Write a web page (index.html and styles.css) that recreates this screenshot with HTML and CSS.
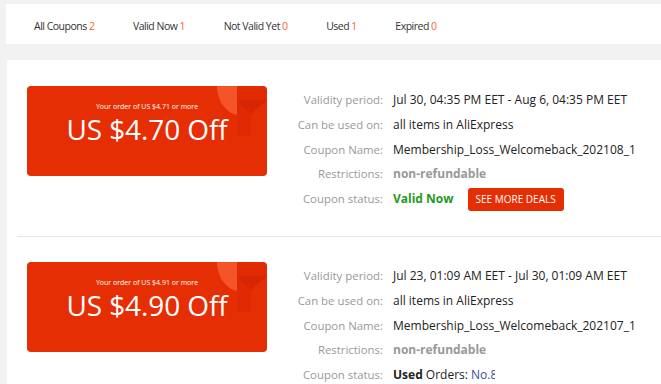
FILE: index.html
```html
<!DOCTYPE html>
<html lang="en">
<head>
<meta charset="utf-8">
<title>My Coupons</title>
<link rel="stylesheet" href="styles.css">
</head>
<body>
<div class="tabs">
  <span class="tab">All Coupons <em>2</em></span>
  <span class="tab">Valid Now <em>1</em></span>
  <span class="tab">Not Valid Yet <em>0</em></span>
  <span class="tab">Used <em>1</em></span>
  <span class="tab">Expired <em>0</em></span>
</div>

<div class="card">
  <div class="item">
    <div class="coupon">
      <svg class="deco" viewBox="0 0 50 50" width="50" height="50" aria-hidden="true">
        <path d="M20 0 H50 V14 L34 27 L20 14 Z" fill="#c81f00" fill-opacity="0.16"/>
        <path d="M20 14 L50 14 L34 28 Z" fill="#b81800" fill-opacity="0.22"/>
        <path d="M20 14 L34 27 V50 H20 Z" fill="#b81800" fill-opacity="0.14"/>
        <path d="M0 0 H20 V29 C8 26 0 14 0 0 Z" fill="#ff7a50" fill-opacity="0.5"/>
      </svg>
      <div class="cond">Your order of US $4.71 or more</div>
      <div class="amount">US $4.70 Off</div>
    </div>
    <div class="info">
      <div class="row"><span class="label">Validity period:</span><span class="value">Jul 30, 04:35 PM EET - Aug 6, 04:35 PM EET</span></div>
      <div class="row"><span class="label">Can be used on:</span><span class="value">all items in AliExpress</span></div>
      <div class="row"><span class="label">Coupon Name:</span><span class="value">Membership_Loss_Welcomeback_202108_1</span></div>
      <div class="row"><span class="label">Restrictions:</span><span class="value muted">non-refundable</span></div>
      <div class="row"><span class="label">Coupon status:</span><span class="value"><b class="valid">Valid Now</b><a class="deals">SEE MORE DEALS</a></span></div>
    </div>
  </div>

  <div class="item">
    <div class="coupon">
      <svg class="deco" viewBox="0 0 50 50" width="50" height="50" aria-hidden="true">
        <path d="M20 0 H50 V14 L34 27 L20 14 Z" fill="#c81f00" fill-opacity="0.16"/>
        <path d="M20 14 L50 14 L34 28 Z" fill="#b81800" fill-opacity="0.22"/>
        <path d="M20 14 L34 27 V50 H20 Z" fill="#b81800" fill-opacity="0.14"/>
        <path d="M0 0 H20 V29 C8 26 0 14 0 0 Z" fill="#ff7a50" fill-opacity="0.5"/>
      </svg>
      <div class="cond">Your order of US $4.91 or more</div>
      <div class="amount">US $4.90 Off</div>
    </div>
    <div class="info">
      <div class="row"><span class="label">Validity period:</span><span class="value">Jul 23, 01:09 AM EET - Jul 30, 01:09 AM EET</span></div>
      <div class="row"><span class="label">Can be used on:</span><span class="value">all items in AliExpress</span></div>
      <div class="row"><span class="label">Coupon Name:</span><span class="value">Membership_Loss_Welcomeback_202107_1</span></div>
      <div class="row"><span class="label">Restrictions:</span><span class="value muted">non-refundable</span></div>
      <div class="row"><span class="label">Coupon status:</span><span class="value"><span class="used"><b>Used</b> Orders: <a class="order">No.8130429871554521</a></span></span></div>
    </div>
  </div>
</div>
</body>
</html>
```

FILE: styles.css
```css
html, body {
  margin: 0;
  padding: 0;
  background: #f2f2f2;
  overflow: hidden;
  font-family: "Open Sans", "Noto Sans", Arial, sans-serif;
  color: #333;
}

.tabs {
  margin: 4px 0 0 6px;
  height: 40px;
  box-sizing: border-box;
  padding: 3px 0 0 28px;
  background: #fff;
  display: flex;
  align-items: center;
  gap: 38.5px;
  font-size: 10.5px;
  letter-spacing: -0.5px;
  white-space: nowrap;
}

.tab em {
  font-style: normal;
  color: #f5651f;
}

.card {
  margin: 16px 0 0 7px;
  background: #fff;
  padding-top: 1px;
}

.item {
  margin: 0 0 0 10px;
  padding: 25px 10px 24px;
  border-bottom: 1px solid #e6e6e6;
  display: flex;
  align-items: flex-start;
}

.coupon {
  position: relative;
  flex: 0 0 auto;
  width: 240px;
  height: 90px;
  border-radius: 4px;
  background: #e62e04;
  color: #fff;
  text-align: center;
  overflow: hidden;
}

.deco {
  position: absolute;
  top: 0;
  right: 0;
}

.cond {
  position: relative;
  margin-top: 16px;
  font-size: 7px;
  line-height: 10px;
}

.amount {
  position: relative;
  margin-top: -1px;
  font-size: 28px;
  letter-spacing: -0.1px;
  line-height: 36px;
}

.info {
  margin: 2px 0 0 16px;
  font-size: 12px;
  line-height: 24.8px;
  white-space: nowrap;
}

.row {
  display: flex;
  align-items: center;
}

.label {
  width: 100px;
  text-align: right;
  color: #999;
  font-size: 11.4px;
}

.value {
  padding-left: 10px;
  color: #222;
  display: flex;
  align-items: center;
}

.muted {
  color: #999;
  font-weight: 700;
}

.valid {
  color: #1f9a1f;
  font-weight: 700;
}

.deals {
  margin-left: 14px;
  height: 23px;
  padding: 0 8px;
  border-radius: 3px;
  background: #e62e04;
  color: #fff;
  font-size: 10px;
  line-height: 23px;
}

.used {
  display: inline-block;
  width: 102px;
  overflow: hidden;
  white-space: nowrap;
}

.used b {
  font-weight: 700;
}

.order {
  color: #3a4f9a;
}
```
